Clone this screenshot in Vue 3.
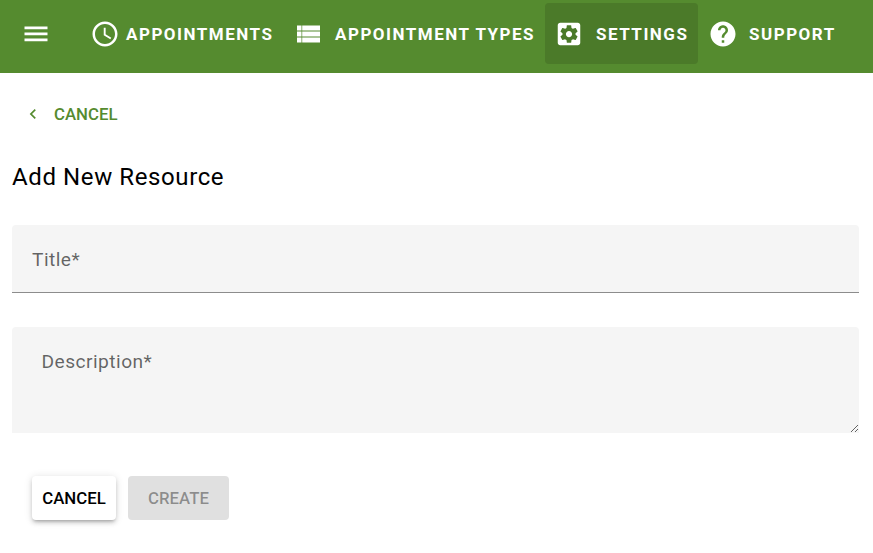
<script setup>
const items = [
  { key: 'clock', label: 'APPOINTMENTS' },
  { key: 'table', label: 'APPOINTMENT TYPES' },
  { key: 'gear', label: 'SETTINGS', active: true },
  { key: 'help', label: 'SUPPORT' }
]
</script>

<template>
  <div class="page">
    <header class="bar">
      <button class="burger" aria-label="menu">
        <svg width="24" height="24" viewBox="0 0 24 24"><path fill="#fff" d="M.5 4.5h23v2.8H.5zM.5 10.5h23v2.8H.5zM.5 16.5h23v2.8H.5z"/></svg>
      </button>
      <nav class="nav">
        <a v-for="i in items" :key="i.key" class="tab" :class="[i.key, { active: i.active }]">
          <svg v-if="i.key === 'clock'" class="ico" viewBox="0 0 24 24"><path fill="#fff" d="M11.99 2C6.47 2 2 6.48 2 12s4.47 10 9.99 10C17.52 22 22 17.52 22 12S17.52 2 11.99 2zM12 20c-4.42 0-8-3.58-8-8s3.58-8 8-8 8 3.58 8 8-3.58 8-8 8zm.5-13H11v6l5.25 3.15.75-1.23-4.5-2.67z"/></svg>
          <svg v-else-if="i.key === 'table'" class="ico" viewBox="0 0 30 30"><path fill="#fff" d="M0 6.5h4.5v5H0zM5.2 6.5H23v5H5.2zM0 12.5h4.5v5H0zM5.2 12.5H23v5H5.2zM0 18.5h4.5v5H0zM5.2 18.5H23v5H5.2z"/></svg>
          <svg v-else-if="i.key === 'gear'" class="ico" viewBox="0 0 24 24"><path fill="#fff" d="M19 3H5c-1.1 0-2 .9-2 2v14c0 1.1.9 2 2 2h14c1.1 0 2-.9 2-2V5c0-1.1-.9-2-2-2zm-1.75 9c0 .23-.02.46-.05.68l1.48 1.16c.13.11.17.3.08.45l-1.4 2.42c-.09.15-.27.21-.43.15l-1.74-.7c-.36.28-.76.51-1.18.69l-.26 1.85c-.03.17-.18.3-.35.3h-2.8c-.17 0-.32-.13-.35-.29l-.26-1.85c-.43-.18-.82-.41-1.18-.69l-1.74.7c-.16.06-.34 0-.43-.15l-1.4-2.42c-.09-.15-.05-.34.08-.45l1.48-1.16c-.03-.23-.05-.46-.05-.69 0-.23.02-.46.05-.68l-1.48-1.16c-.13-.11-.17-.3-.08-.45l1.4-2.42c.09-.15.27-.21.43-.15l1.74.7c.36-.28.76-.51 1.18-.69l.26-1.85c.03-.17.18-.3.35-.3h2.8c.17 0 .32.13.35.29l.26 1.85c.43.18.82.41 1.18.69l1.74-.7c.16-.06.34 0 .43.15l1.4 2.42c.09.15.05.34-.08.45l-1.48 1.16c.03.23.05.46.05.69zM12 9.5c-1.38 0-2.5 1.12-2.5 2.5s1.12 2.5 2.5 2.5 2.5-1.12 2.5-2.5-1.12-2.5-2.5-2.5z"/></svg>
          <svg v-else class="ico" viewBox="0 0 24 24"><path fill="#fff" d="M12 2C6.48 2 2 6.48 2 12s4.48 10 10 10 10-4.48 10-10S17.52 2 12 2zm1 17h-2v-2h2v2zm2.07-7.75-.9.92C13.45 12.9 13 13.5 13 15h-2v-.5c0-1.1.45-2.1 1.17-2.83l1.24-1.26c.37-.36.59-.86.59-1.41 0-1.1-.9-2-2-2s-2 .9-2 2H8c0-2.21 1.79-4 4-4s4 1.79 4 4c0 .88-.36 1.68-.93 2.25z"/></svg>
          <span>{{ i.label }}</span>
        </a>
      </nav>
    </header>

    <main class="main">
      <a class="back">
        <svg width="20" height="20" viewBox="0 0 24 24"><path fill="#558b2f" d="M15.41 7.41 14 6l-6 6 6 6 1.41-1.41L10.83 12z"/></svg>
        <span>CANCEL</span>
      </a>
      <h1 class="title">Add New Resource</h1>
      <input class="field input" placeholder="Title*" />
      <textarea class="field area" placeholder="Description*"></textarea>
      <div class="actions">
        <button class="btn cancel">CANCEL</button>
        <button class="btn create" disabled>CREATE</button>
      </div>
    </main>
  </div>
</template>

<style>
html, body { margin: 0; background: #fff; }
</style>

<style scoped>
.page { width: 873px; height: 553px; overflow: hidden; font-family: Roboto, sans-serif; }
.bar { height: 73px; background: #558b2f; display: flex; align-items: flex-start; box-sizing: border-box; }
.burger { width: 24px; height: 24px; margin: 22px 0 0 24px; padding: 0; border: 0; background: none; }
.nav { display: flex; margin-left: 31.5px; padding-top: 3px; }
.tab { height: 61px; box-sizing: border-box; display: flex; align-items: center; border-radius: 4px; color: #fff; font-size: 17px; font-weight: 700; letter-spacing: 1.5px; white-space: nowrap; }
.tab.clock { gap: 6.5px; padding-left: 10px; width: 203.5px; }
.tab.table { gap: 8px; padding-left: 14px; width: 262px; }
.tab.gear { gap: 12px; padding-left: 9px; width: 153px; background: #4b7a29; }
.tab.help { gap: 11.5px; padding-left: 9.5px; }
.ico { width: 30px; height: 30px; flex: none; }
.main { padding: 0 14px 0 12px; }
.back { display: flex; align-items: center; height: 36px; margin-top: 23px; padding-left: 11px; gap: 11px; color: #558b2f; font-size: 16.8px; font-weight: 500; }
.title { margin: 29px 0 0; font-size: 24px; font-weight: 450; line-height: 32px; letter-spacing: .6px; color: #000; }
.field { display: block; width: 847px; box-sizing: border-box; border: 0; outline: 0; background: #f5f5f5; font-family: Roboto, sans-serif; font-size: 19.2px; letter-spacing: .45px; color: #000; }
.field::placeholder { color: rgba(0,0,0,.6); opacity: 1; }
.input { height: 68px; margin-top: 32px; padding: 1px 20px 0 20px; border-radius: 4px 4px 0 0; border-bottom: 1px solid #8c8c8c; }
.area { height: 106px; margin-top: 34px; padding: 23px 29.5px 0; border-radius: 4px 4px 0 0; resize: vertical; }
.actions { display: flex; gap: 12px; margin: 43px 0 0 20px; }
.btn { height: 44px; padding: 0; border: 0; border-radius: 4px; font-family: Roboto, sans-serif; font-size: 16.8px; font-weight: 500; }
.cancel { width: 84px; background: #fff; color: #000; box-shadow: 0 3px 3px -2px rgba(0,0,0,.2), 0 3px 4px rgba(0,0,0,.14), 0 1px 8px rgba(0,0,0,.12); }
.create { width: 101px; background: #e0e0e0; color: rgba(0,0,0,.38); }
</style>
